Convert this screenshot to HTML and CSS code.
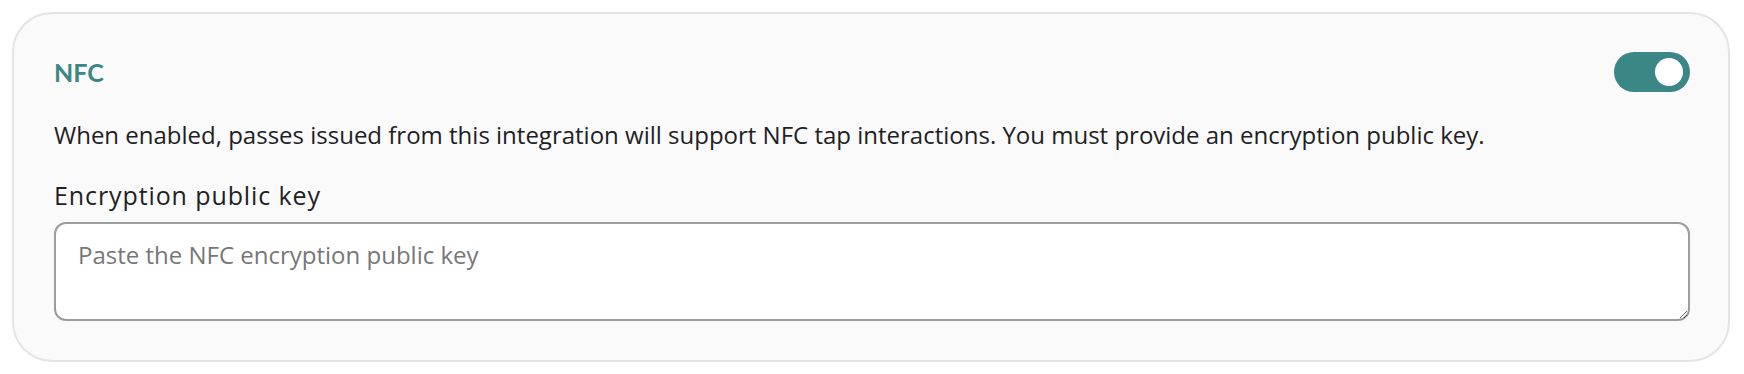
FILE: index.html
```html
<!DOCTYPE html>
<html lang="en">
<head>
    <meta charset="UTF-8">
    <meta name="viewport" content="width=device-width, initial-scale=1.0">
    <title>NFC settings</title>
    <link rel="stylesheet" href="styles.css">
</head>
<body>
    <section class="card">
        <div class="card-header">
            <h2 class="card-title">NFC</h2>
            <!-- Toggle ligado -->
            <label class="toggle">
                <input type="checkbox" checked>
                <span class="toggle-track"><span class="toggle-knob"></span></span>
            </label>
        </div>

        <p class="card-text">When enabled, passes issued from this integration will support NFC tap interactions. You must provide an encryption public key.</p>

        <label class="field-label" for="nfcKey">Encryption public key</label>
        <textarea id="nfcKey" class="field-input" placeholder="Paste the NFC encryption public key"></textarea>
    </section>
</body>
</html>
```

FILE: styles.css
```css
body {
    font-family: 'Open Sans', 'Noto Sans', sans-serif;
    margin: 0;
    padding: 12px 14px 12px 12px;
    background-color: #ffffff;
    color: #1e2124;
}

.card {
    background-color: #fafafa;
    border: 2px solid #e4e4e4;
    border-radius: 40px;
    padding: 38px 38px 39px 40px;
}

.card-header {
    display: flex;
    align-items: center;
    justify-content: space-between;
    height: 40px;
}

.card-title {
    margin: 0;
    font-family: 'Lato', sans-serif;
    font-size: 25px;
    font-weight: 700;
    color: #3b8786;
}

/* Toggle */
.toggle {
    display: inline-block;
    cursor: pointer;
}

.toggle input {
    display: none;
}

.toggle-track {
    display: flex;
    align-items: center;
    justify-content: flex-end;
    width: 76px;
    height: 40px;
    padding: 0 7px;
    box-sizing: border-box;
    border-radius: 20px;
    background-color: #3b8786;
}

.toggle-knob {
    width: 28px;
    height: 28px;
    border-radius: 50%;
    background-color: #ffffff;
}

.card-text {
    margin: 26px 0 0;
    font-size: 24px;
    line-height: 34px;
}

.field-label {
    display: block;
    margin-top: 26px;
    font-size: 25px;
    font-weight: 500;
    letter-spacing: 0.9px;
    line-height: 34px;
}

.field-input {
    display: block;
    width: 100%;
    height: 99px;
    box-sizing: border-box;
    margin-top: 10px;
    padding: 14px 22px;
    font-family: inherit;
    font-size: 24px;
    color: #1e2124;
    background-color: #ffffff;
    border: 2px solid #9c9c9c;
    border-radius: 12px;
    outline: none;
}

.field-input::placeholder {
    color: #777777;
}
```
